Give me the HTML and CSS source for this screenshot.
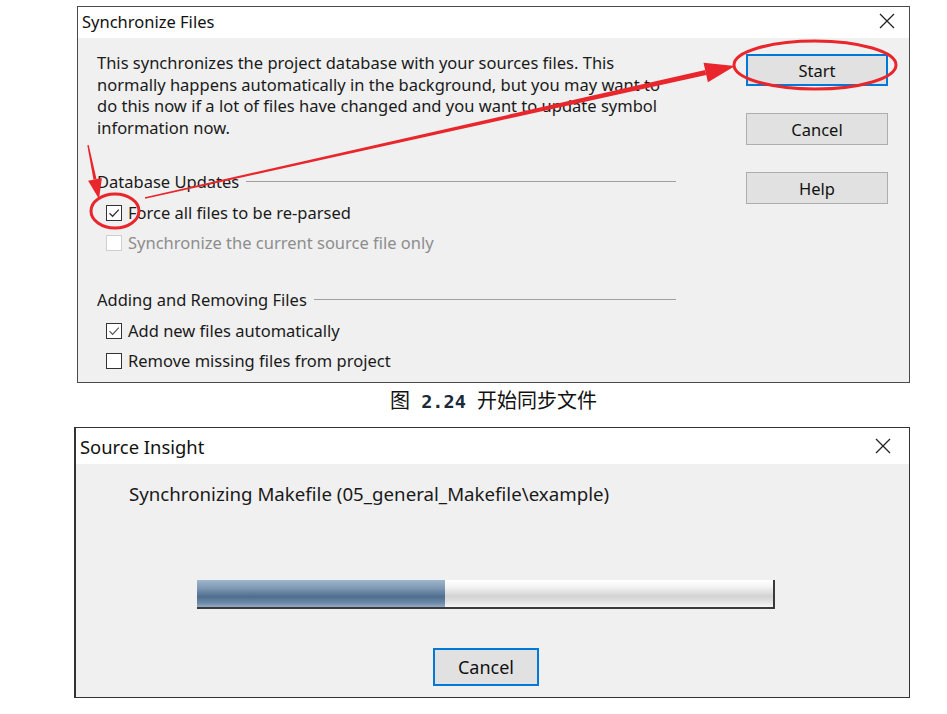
FILE: index.html
```html
<!DOCTYPE html>
<html lang="en">
<head>
<meta charset="utf-8">
<title>Synchronize Files</title>
<link rel="stylesheet" href="styles.css">
</head>
<body>
<div class="page">
  <section class="dlg sync">
    <header class="titlebar">
      <span class="title">Synchronize Files</span>
      <svg class="close" width="16" height="16" viewBox="0 0 16 16"><path d="M1 1L15 15M15 1L1 15" stroke="#222" stroke-width="1.3" fill="none"/></svg>
    </header>
    <div class="body">
      <div class="main">
        <p class="desc">This synchronizes the project database with your sources files. This<br>normally happens automatically in the background, but you may want to<br>do this now if a lot of files have changed and you want to update symbol<br>information now.</p>
        <div class="group first">
          <div class="group-head"><span>Database Updates</span><span class="rule"></span></div>
          <label class="chk"><span class="box checked"><svg width="14" height="14" viewBox="0 0 14 14"><path d="M2.5 7.2L5.6 10.3L11.8 3.6" stroke="#333" stroke-width="1.3" fill="none"/></svg></span>Force all files to be re-parsed</label>
          <label class="chk disabled"><span class="box"></span>Synchronize the current source file only</label>
        </div>
        <div class="group">
          <div class="group-head"><span>Adding and Removing Files</span><span class="rule"></span></div>
          <label class="chk"><span class="box checked"><svg width="14" height="14" viewBox="0 0 14 14"><path d="M2.5 7.2L5.6 10.3L11.8 3.6" stroke="#555" stroke-width="1.2" fill="none"/></svg></span>Add new files automatically</label>
          <label class="chk"><span class="box"></span>Remove missing files from project</label>
        </div>
      </div>
      <div class="buttons">
        <button class="btn default">Start</button>
        <button class="btn">Cancel</button>
        <button class="btn">Help</button>
      </div>
    </div>
  </section>

  <p class="caption">图<b> 2.24 </b>开始同步文件</p>

  <section class="dlg prog">
    <header class="titlebar tall">
      <span class="title">Source Insight</span>
      <svg class="close" width="16" height="16" viewBox="0 0 16 16"><path d="M1 1L15 15M15 1L1 15" stroke="#222" stroke-width="1.3" fill="none"/></svg>
    </header>
    <div class="body2">
      <p class="status">Synchronizing Makefile (05_general_Makefile\example)</p>
      <div class="bar"><div class="fill" style="width:43%"></div></div>
      <button class="btn default big">Cancel</button>
    </div>
  </section>
</div>

<svg class="annot" width="947" height="714" viewBox="0 0 947 714">
  <g fill="#e8262c" stroke="none">
    <polygon points="145.2,198.7 144.8,197.3 705.2,70.1 706.2,74.9"/>
    <polygon points="735,66 703.5,62.7 707.9,82.3"/>
    <polygon points="88.7,144.9 87.3,145.2 93.5,179.7 96.5,179.1"/>
    <polygon points="99,199 88.1,180.8 101.9,178"/>
  </g>
  <g fill="none" stroke="#e8262c" stroke-width="3">
    <ellipse cx="815" cy="65" rx="81" ry="24"/>
    <ellipse cx="115" cy="211" rx="24" ry="17"/>
  </g>
</svg>
</body>
</html>
```

FILE: styles.css
```css
* { box-sizing: border-box; }
html, body { margin: 0; padding: 0; background: #fff; }
body {
  width: 947px;
  height: 714px;
  overflow: hidden;
  position: relative;
  font-family: "Noto Sans", "Open Sans", sans-serif;
  color: #1a1a1a;
}
.page {
  padding-top: 6px;
  display: flex;
  flex-direction: column;
}
.dlg {
  border: 1px solid #4a4a4a;
  background: #f0f0f0;
}
.sync {
  margin-left: 77px;
  width: 833px;
  height: 377px;
}
.titlebar {
  background: #fff;
  height: 31px;
  display: flex;
  align-items: center;
  justify-content: space-between;
  padding: 0 14px 3px 4px;
}
.titlebar.tall { height: 36px; padding: 0 18px 0 4px; }
.title { font-size: 16.5px; color: #111; }
.tall .title { font-size: 18.4px; }
.close { display: block; }

.body {
  display: flex;
  padding: 14px 20px 0 19px;
}
.main { width: 579px; }
.desc {
  margin: 0;
  font-size: 16.5px;
  line-height: 21.7px;
  white-space: nowrap;
}
.group { margin-top: 31px; }
.group.first { margin-top: 32px; }
.group-head {
  display: flex;
  align-items: center;
  height: 22px;
  font-size: 16.5px;
  margin-bottom: 5px;
}
.rule {
  flex: 1;
  height: 1px;
  background: #a0a0a0;
  margin-left: 7px;
}
.chk {
  display: flex;
  align-items: center;
  height: 30px;
  font-size: 16.5px;
  padding-left: 9px;
}
.box {
  width: 16px;
  height: 16px;
  border: 1px solid #333;
  background: #fff;
  margin-right: 6px;
  display: flex;
  align-items: center;
  justify-content: center;
}
.chk.disabled { color: #8d8d8d; }
.chk.disabled .box { border-color: #cfcfcf; }

.buttons {
  margin-left: 70px;
  display: flex;
  flex-direction: column;
  gap: 27px;
  padding-top: 2px;
}
.btn {
  width: 142px;
  height: 32px;
  background: #e1e1e1;
  border: 1px solid #adadad;
  font-family: inherit;
  font-size: 16.5px;
  color: #111;
  padding: 0;
}
.btn.default { border: 2px solid #0078d7; }

.caption {
  margin: 4px 0 0 77px;
  width: 833px;
  height: 26px;
  text-align: center;
  font-family: "Noto Sans CJK SC", sans-serif;
  font-size: 20px;
  line-height: 26px;
  color: #111;
  white-space: pre;
}
.caption b {
  font-family: "DejaVu Sans Mono", "Liberation Mono", monospace;
  font-weight: bold;
  font-size: 18.5px;
  color: #1b2a3a;
}

.prog {
  margin-top: 14px;
  margin-left: 74px;
  width: 836px;
  height: 271px;
  border-width: 1px 1px 1px 2px;
  border-color: #333;
}
.body2 {
  padding: 17px 0 0 53px;
  display: flex;
  flex-direction: column;
  align-items: flex-start;
}
.status {
  margin: 0;
  font-size: 18.7px;
  line-height: 26px;
  white-space: nowrap;
}
.bar {
  margin: 73px 0 0 68px;
  width: 578px;
  height: 29px;
  border-right: 2px solid #3a3a3a;
  border-bottom: 2px solid #3a3a3a;
  background: linear-gradient(#ffffff 0%, #f4f4f4 25%, #d2d2d2 60%, #e6e6e6 85%, #f6f6f6 100%);
}
.fill {
  height: 100%;
  background: linear-gradient(#9fb5cd 0%, #7f98b4 30%, #4e6d8f 62%, #6e8aa8 85%, #94aac3 100%);
}
.btn.big {
  margin: 39px 0 0 304px;
  width: 106px;
  height: 38px;
  font-size: 18px;
}

.annot {
  position: absolute;
  left: 0;
  top: 0;
  pointer-events: none;
}
```
